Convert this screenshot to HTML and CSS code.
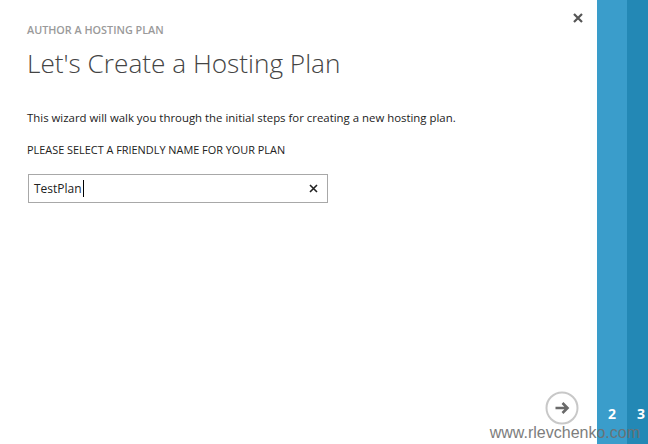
FILE: index.html
```html
<!DOCTYPE html>
<html>
<head>
<meta charset="utf-8">
<link rel="stylesheet" href="styles.css">
</head>
<body>
<div class="dialog">
  <main class="main">
    <button class="close" aria-label="Close">
      <svg width="10" height="10" viewBox="0 0 10 10"><path d="M1 1L9 9M9 1L1 9" stroke="#555" stroke-width="2.2"/></svg>
    </button>
    <div class="eyebrow">AUTHOR A HOSTING PLAN</div>
    <h1 class="title">Let's Create a Hosting Plan</h1>
    <p class="intro">This wizard will walk you through the initial steps for creating a new hosting plan.</p>
    <div class="label">PLEASE SELECT A FRIENDLY NAME FOR YOUR PLAN</div>
    <div class="field">
      <span class="value">TestPlan</span><span class="caret"></span>
      <svg class="clear" width="9" height="9" viewBox="0 0 9 9"><path d="M1 1L8 8M8 1L1 8" stroke="#222" stroke-width="1.6"/></svg>
    </div>
    <div class="spacer"></div>
    <div class="footer">
      <span class="next">
        <svg width="34" height="34" viewBox="0 0 34 34"><circle cx="17" cy="17" r="15.5" fill="#fff" stroke="#c8c8c8" stroke-width="2"/><path d="M10.5 17H22M17.5 12L22.5 17L17.5 22" fill="none" stroke="#6a6a6a" stroke-width="2.6"/></svg>
      </span>
    </div>
  </main>
  <div class="step step-2"><span class="num">2</span></div>
  <div class="step step-3"><span class="num">3</span></div>
  <div class="watermark">www.rlevchenko.com</div>
</div>
</body>
</html>
```
FILE: styles.css
```css
html, body {
  margin: 0;
  padding: 0;
  background: #fff;
}
.dialog {
  position: relative;
  display: flex;
  width: 648px;
  height: 444px;
  overflow: hidden;
  font-family: "Open Sans", "Noto Sans", sans-serif;
}
.main {
  position: relative;
  flex: 0 0 597px;
  display: flex;
  flex-direction: column;
  box-sizing: border-box;
  padding: 22px 0 0 27px;
}
.close {
  position: absolute;
  top: 13px;
  left: 573px;
  padding: 0;
  border: 0;
  background: none;
  line-height: 0;
}
.eyebrow {
  font-size: 10.8px;
  font-weight: 600;
  color: #9a9a9a;
  line-height: 16px;
}
.title {
  margin: 9px 0 0 0;
  font-size: 26.2px;
  font-weight: 300;
  color: #444;
  line-height: 32px;
}
.intro {
  margin: 31px 0 0 0;
  font-size: 11.4px;
  color: #222;
  line-height: 16px;
}
.label {
  margin-top: 16px;
  font-size: 10.9px;
  color: #222;
  line-height: 16px;
}
.field {
  margin: 16px 0 0 1px;
  width: 300px;
  height: 29px;
  box-sizing: border-box;
  border: 1px solid #a8a8a8;
  display: flex;
  align-items: center;
  padding: 0 9px 0 5px;
  font-size: 12px;
  color: #222;
}
.value {
  line-height: 16px;
}
.caret {
  width: 1px;
  height: 17px;
  background: #000;
  margin-left: 1px;
}
.clear {
  margin-left: auto;
}
.spacer {
  flex: 1;
}
.footer {
  display: flex;
  justify-content: flex-end;
  padding: 0 18px 19px 0;
}
.next {
  line-height: 0;
}
.step {
  display: flex;
  flex-direction: column;
  justify-content: flex-end;
  box-sizing: border-box;
  padding-bottom: 22px;
  color: #fff;
  font-family: "Open Sans", sans-serif;
  font-weight: 700;
  font-size: 14px;
  line-height: 16px;
}
.step-2 {
  flex: 0 0 30px;
  background: #3a9dcb;
  align-items: center;
}
.step-3 {
  flex: 0 0 21px;
  background: #2388b5;
  padding-left: 10px;
}
.watermark {
  position: absolute;
  right: 8px;
  bottom: 2px;
  font-family: "Liberation Sans", Arial, sans-serif;
  font-size: 16px;
  color: #6f6f6f;
  opacity: 0.9;
}
```
